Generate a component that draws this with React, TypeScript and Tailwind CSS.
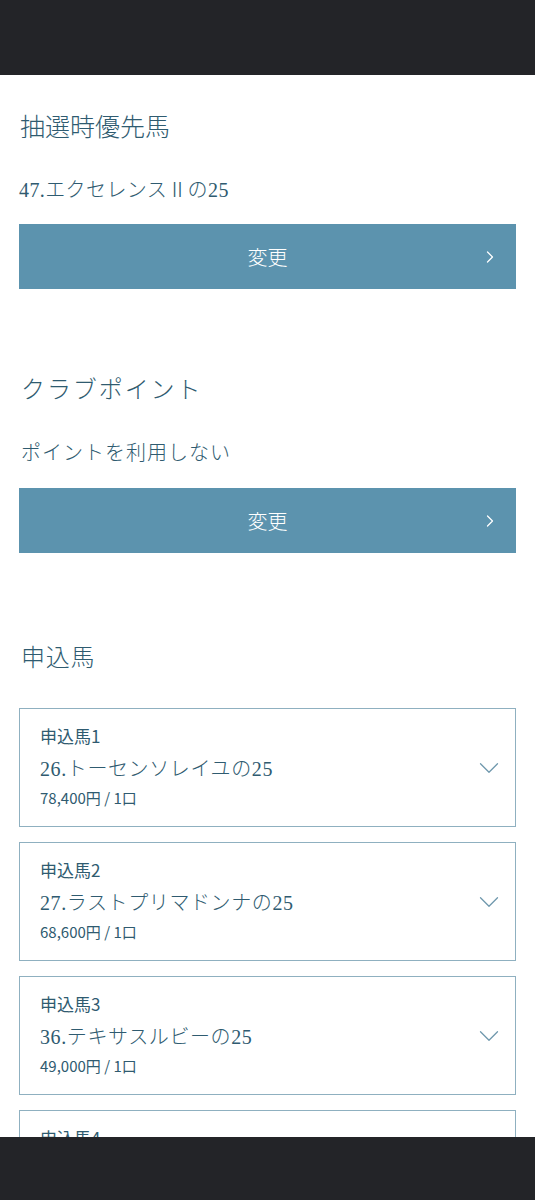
import { ChevronRight, ChevronDown } from 'lucide-react'

const serif = { fontFamily: '"Liberation Serif", "Noto Sans CJK JP", serif' }

const horses = [
  { label: '申込馬1', name: '26.トーセンソレイユの25', price: '78,400円 / 1口' },
  { label: '申込馬2', name: '27.ラストプリマドンナの25', price: '68,600円 / 1口' },
  { label: '申込馬3', name: '36.テキサスルビーの25', price: '49,000円 / 1口' },
  { label: '申込馬4', name: '41.サンプルの25', price: '49,000円 / 1口' },
]

function ChangeButton() {
  return (
    <button className="relative w-full h-[65px] bg-[#5c93ae] flex items-center justify-center text-white text-[20px] leading-[30px]">
      <span className="font-light">変更</span>
      <ChevronRight className="absolute right-[16px] top-1/2 -translate-y-1/2 w-[20px] h-[20px]" strokeWidth={1.5} />
    </button>
  )
}

export default function App() {
  return (
    <div
      className="min-h-[1200px] bg-white text-[#2f5b70]"
      style={{ fontFamily: '"Noto Sans CJK JP", "Noto Sans", sans-serif' }}
    >
      <div className="h-[75px] bg-[#232428]" />

      <main className="px-[19px] pb-[120px]">
        <section className="pt-[35px]">
          <h2 className="text-[25px] leading-[36px] font-light pl-[1px]" style={serif}>抽選時優先馬</h2>
          <p className="mt-[29px] text-[20px] leading-[30px] font-light tracking-[0.02em]" style={serif}>47.エクセレンスⅡの25</p>
          <div className="mt-[19px]">
            <ChangeButton />
          </div>
        </section>

        <section className="pt-[83px]">
          <h2 className="text-[24px] leading-[36px] font-light pl-[2px] tracking-[0.08em]" style={serif}>クラブポイント</h2>
          <p className="mt-[30px] text-[20px] leading-[30px] font-light pl-[2px] tracking-[0.05em]" style={serif}>ポイントを利用しない</p>
          <div className="mt-[20px]">
            <ChangeButton />
          </div>
        </section>

        <section className="pt-[87px]">
          <h2 className="text-[24px] leading-[36px] font-light pl-[2px] tracking-[0.03em]" style={serif}>申込馬</h2>
          <div className="mt-[32px] flex flex-col gap-[15px]">
            {horses.map((h) => (
              <div key={h.label} className="relative border border-[#8fb0c0] pl-[20px] pr-[50px] pt-[15px] pb-[18px]">
                <div className="text-[17px] leading-[24px] font-normal">{h.label}</div>
                <div className="mt-[6px] text-[20px] leading-[30px] font-light tracking-[0.03em]" style={serif}>{h.name}</div>
                <div className="mt-[4px] text-[15px] leading-[20px] font-normal">{h.price}</div>
                <ChevronDown className="absolute right-[9px] top-[42px] w-[34px] h-[34px] text-[#6f98ad]" strokeWidth={0.9} />
              </div>
            ))}
          </div>
        </section>
      </main>

      <div className="fixed bottom-0 left-0 right-0 h-[63px] bg-[#232428]" />
    </div>
  )
}
